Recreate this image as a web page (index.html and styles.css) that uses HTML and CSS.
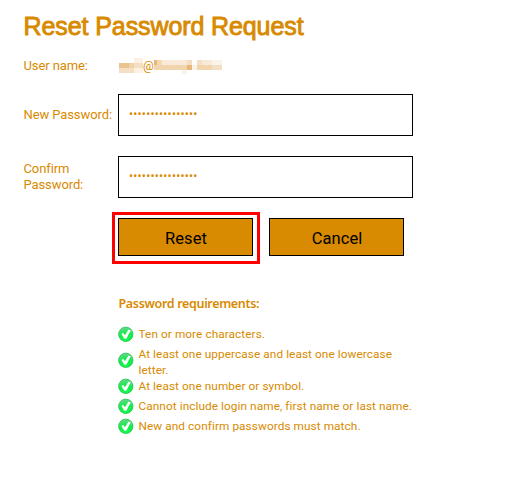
FILE: index.html
```html
<!DOCTYPE html>
<html lang="en">
<head>
<meta charset="utf-8">
<title>Reset Password Request</title>
<link rel="stylesheet" href="styles.css">
</head>
<body>
<svg class="defs" width="0" height="0" aria-hidden="true">
  <defs>
    <radialGradient id="ball" cx=".5" cy=".85" r=".85">
      <stop offset="0" stop-color="#0cff45"/>
      <stop offset=".55" stop-color="#12ec4a"/>
      <stop offset="1" stop-color="#6fd590"/>
    </radialGradient>
    <symbol id="ok" viewBox="0 0 16 16">
      <circle cx="7.8" cy="8.3" r="7.2" fill="url(#ball)" stroke="#27c455" stroke-width=".8"/>
      <path d="M3.4 7.9 5.2 6.8 7 9.2 10.3 3.8 12.8 4.3 8.3 12.8 6.3 12.8Z" fill="#fff"/>
    </symbol>
  </defs>
</svg>
<main class="page">
  <h1 class="title">Reset Password Request</h1>
  <form class="form">
    <div class="row row-user">
      <span class="label">User name:</span>
      <span class="user">
        <svg width="24" height="16" viewBox="0 0 24 16" shape-rendering="crispEdges">
          <path fill="#eac38e" d="M0 5h10v5H0z"/><path fill="#efd1aa" d="M10 5h5v5h-5z"/><path fill="#f5dfc4" d="M0 10h15v5H0zM15 5h4v5h-4z"/><path fill="#fbf0e2" d="M15 0h9v5h-9zM15 10h9v5h-9z"/><path fill="#f3dfc8" d="M19 5h5v5h-5z"/>
        </svg><span class="at">@</span><svg width="69" height="16" viewBox="0 0 69 16" shape-rendering="crispEdges">
          <path fill="#e8b878" d="M0 2h3v5H0zM33 7h5v5h-5z"/><path fill="#f3d8b0" d="M3 2h5v5H3z"/><path fill="#f8e9d8" d="M8 2h25v5H8zM48 2h10v5H48z"/><path fill="#f4dfc4" d="M33 2h5v5h-5zM43 2h5v5h-5zM58 7h10v5H58z"/><path fill="#f1d5ad" d="M0 7h33v5H0zM43 7h15v5H43z"/><path fill="#fbf2e8" d="M58 2h10v5H58zM38 7h5v5h-5zM28 12h5v4h-5z"/>
        </svg>
      </span>
    </div>
    <div class="row row-new">
      <label class="label" for="p1">New Password:</label>
      <div class="input" id="p1"><span class="dots">••••••••••••••••</span></div>
    </div>
    <div class="row row-confirm">
      <label class="label" for="p2">Confirm<br>Password:</label>
      <div class="input" id="p2"><span class="dots">••••••••••••••••</span></div>
    </div>
    <div class="actions">
      <div class="highlight"><button type="button" class="btn">Reset</button></div>
      <button type="button" class="btn">Cancel</button>
    </div>
  </form>
  <section class="rules">
    <h2 class="rules-title">Password requirements:</h2>
    <ul class="list">
      <li><svg class="ok"><use href="#ok"/></svg><span>Ten or more characters.</span></li>
      <li class="two"><svg class="ok"><use href="#ok"/></svg><span>At least one uppercase and least one lowercase<br>letter.</span></li>
      <li><svg class="ok"><use href="#ok"/></svg><span>At least one number or symbol.</span></li>
      <li><svg class="ok"><use href="#ok"/></svg><span>Cannot include login name, first name or last name.</span></li>
      <li><svg class="ok"><use href="#ok"/></svg><span>New and confirm passwords must match.</span></li>
    </ul>
  </section>
</main>
</body>
</html>
```
FILE: styles.css
```css
* { box-sizing: border-box; }
body { margin: 0; background: #fff; color: #d88a00; font: 13px/16px Roboto, sans-serif; }
.defs { display: block; }
.page { padding: 10px 0 0 23px; }
.title { margin: 0; height: 32px; padding-left: .6px; font: 400 25px/32px "Liberation Sans", sans-serif; letter-spacing: -.1px; -webkit-text-stroke: .9px #d88a00; white-space: nowrap; }
.row { display: flex; align-items: center; }
.label { width: 95px; padding-left: .5px; white-space: nowrap; letter-spacing: -.1px; }
.row-user { height: 16px; margin-top: 16px; }
.user { display: flex; padding-left: 1px; }
.user svg { display: block; }
.at { width: 11px; font-size: 12px; text-align: center; }
.row-new { margin-top: 20px; }
.row-confirm { margin-top: 20px; }
.input { width: 295px; height: 42px; border: 1px solid #000; padding: 11px 10px; }
.dots { display: block; font-size: 12px; line-height: 16px; letter-spacing: .24px; }
.actions { display: flex; margin: 14px 0 0 89px; align-items: flex-start; }
.highlight { border: 3px solid #f00; padding: 3px; width: 148px; height: 52px; margin-right: 9px; }
.btn { display: block; width: 135px; height: 38px; border: 1px solid #000; border-radius: 0; background: #d88a00; color: #000; padding: 4px 0 0 1px; font: 16.5px/20px Roboto, sans-serif; letter-spacing: .05px; }
.actions > .btn { margin-top: 6px; }
.rules { margin: 31px 0 0 95px; }
.rules-title { margin: 0; padding-left: .5px; font: 600 12.5px/17px "Noto Sans", sans-serif; letter-spacing: -.33px; white-space: nowrap; }
.list { list-style: none; margin: 12px 0 0; padding: 0; font-size: 11.8px; letter-spacing: .08px; }
.list li { display: flex; align-items: center; height: 20px; white-space: nowrap; }
.list .two { height: 32px; }
.list .two span { padding-top: 4px; }
.ok { width: 16px; height: 16px; margin-right: 4.5px; flex: none; }
```
